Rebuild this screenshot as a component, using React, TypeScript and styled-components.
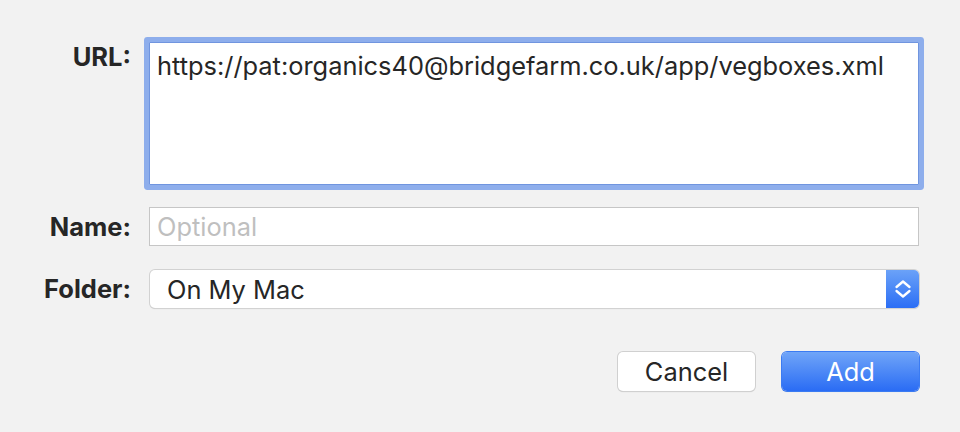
import React from "react";
import styled, { createGlobalStyle } from "styled-components";

const GlobalStyle = createGlobalStyle`
  html, body {
    margin: 0;
    padding: 0;
    background: #f2f2f2;
  }
  body {
    font-family: Inter, "Noto Sans", "Liberation Sans", sans-serif;
    -webkit-font-smoothing: antialiased;
  }
`;

function App() {
  return (
    <>
      <GlobalStyle />
      <Sheet>
        <Form>
          <Label>URL:</Label>
          <UrlBox>
            https://pat:organics40@bridgefarm.co.uk/app/vegboxes.xml
          </UrlBox>

          <Label $center $gap={22}>Name:</Label>
          <NameField $gap={22}>
            <Placeholder>Optional</Placeholder>
          </NameField>

          <Label $center $gap={24}>Folder:</Label>
          <Select $gap={24}>
            <SelectText>On My Mac</SelectText>
            <Stepper>
              <svg width="18" height="24" viewBox="0 0 18 24" fill="none">
                <path
                  d="M2.5 10 L9 4.5 L15.5 10"
                  stroke="#fff"
                  strokeWidth="2.3"
                  strokeLinecap="round"
                  strokeLinejoin="round"
                />
                <path
                  d="M2.5 14 L9 19.5 L15.5 14"
                  stroke="#fff"
                  strokeWidth="2.3"
                  strokeLinecap="round"
                  strokeLinejoin="round"
                />
              </svg>
            </Stepper>
          </Select>
        </Form>

        <Actions>
          <Button>Cancel</Button>
          <Button $primary>Add</Button>
        </Actions>
      </Sheet>
    </>
  );
}

const Sheet = styled.div`
  width: 960px;
  height: 432px;
  box-sizing: border-box;
  padding-top: 42px;
  background: #f2f2f2;
  color: #262626;
`;

const Form = styled.div`
  display: grid;
  grid-template-columns: 131px 770px;
  column-gap: 18px;
  align-items: start;
`;

const Label = styled.div<{ $center?: boolean; $gap?: number }>`
  align-self: ${(p) => (p.$center ? "center" : "start")};
  text-align: right;
  font-weight: 700;
  font-size: 25.5px;
  line-height: 30px;
  color: #262626;
  margin-top: ${(p) => p.$gap || 0}px;
`;

const UrlBox = styled.div`
  box-sizing: border-box;
  height: 143px;
  background: #fff;
  border: 1px solid #7095df;
  box-shadow: 0 0 0 5px #8eaeec;
  border-radius: 1px;
  padding: 8px 7px;
  font-size: 25.4px;
  line-height: 30px;
  color: #262626;
`;

const NameField = styled.div<{ $gap: number }>`
  box-sizing: border-box;
  height: 39px;
  margin-top: ${(p) => p.$gap}px;
  background: #fff;
  border: 1px solid #c6c6c6;
  display: flex;
  align-items: center;
  padding: 0 7px;
`;

const Placeholder = styled.span`
  font-size: 25.4px;
  color: #bfbfbf;
`;

const Select = styled.div<{ $gap: number }>`
  box-sizing: border-box;
  height: 38px;
  margin-top: ${(p) => p.$gap}px;
  margin-left: 1px;
  background: #fff;
  border-radius: 5px;
  box-shadow: 0 0 0 1px #d2d2d2, 0 1px 1px rgba(0, 0, 0, 0.18);
  display: flex;
  align-items: center;
  overflow: hidden;
`;

const SelectText = styled.span`
  flex: 1;
  padding-left: 17px;
  font-size: 25.4px;
  color: #262626;
`;

const Stepper = styled.div`
  width: 33px;
  align-self: stretch;
  background: linear-gradient(#6ba2f8, #2b6ef5);
  display: flex;
  align-items: center;
  justify-content: center;
`;

const Actions = styled.div`
  display: flex;
  gap: 27px;
  width: 919px;
  justify-content: flex-end;
  margin-top: 44px;
`;

const Button = styled.div<{ $primary?: boolean }>`
  box-sizing: border-box;
  width: 137px;
  height: 39px;
  border-radius: 5px;
  display: flex;
  align-items: center;
  justify-content: center;
  font-size: 25.4px;
  color: ${(p) => (p.$primary ? "#fff" : "#262626")};
  background: ${(p) =>
    p.$primary ? "linear-gradient(#70a5f8, #2a6cf4)" : "#fff"};
  box-shadow: ${(p) =>
    p.$primary
      ? "0 0 0 1px #3b7bf2, 0 1px 1px rgba(0,0,0,0.15)"
      : "0 0 0 1px #d0d0d0, 0 1px 1px rgba(0,0,0,0.2)"};
`;

export default App;
